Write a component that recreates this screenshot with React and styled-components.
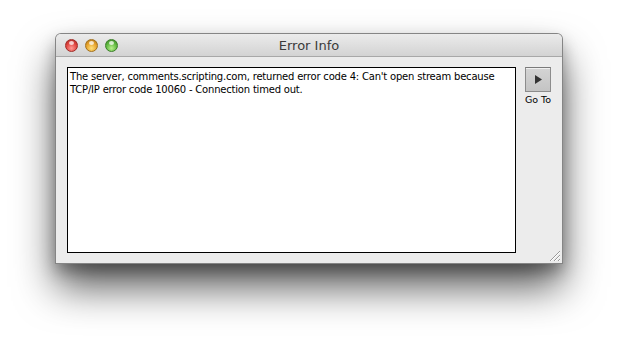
import { createGlobalStyle, styled } from 'styled-components';

const Global = createGlobalStyle`
  html, body { margin: 0; background: #fff; }
  body { font-family: "DejaVu Sans", sans-serif; }
`;

const Page = styled.div`
  width: 618px;
  height: 342px;
  padding: 34px 0 0 56px;
  box-sizing: border-box;
`;

const Window = styled.div`
  width: 506px;
  height: 229px;
  background: #ececec;
  border-radius: 5px 5px 0 0;
  box-shadow: 0 0 0 1px #858585, 0 24px 40px rgba(0, 0, 0, 0.65), 0 8px 16px rgba(0, 0, 0, 0.3);
  display: flex;
  flex-direction: column;
  position: relative;
`;

const TitleBar = styled.div`
  height: 22px;
  border-radius: 5px 5px 0 0;
  background: linear-gradient(#ebebeb, #d3d3d3);
  border-bottom: 1px solid #a8a8a8;
  display: flex;
  align-items: center;
  padding-left: 9px;
  position: relative;
`;

const Lights = styled.div`
  display: flex;
  gap: 7px;
`;

const Light = styled.span`
  width: 13px;
  height: 13px;
  box-sizing: border-box;
  border-radius: 50%;
  border: 1px solid ${p => p.$edge};
  background: radial-gradient(circle at 50% 75%, ${p => p.$hi} 0%, ${p => p.$c} 55%, ${p => p.$edge} 100%);
  position: relative;
  &::after {
    content: '';
    position: absolute;
    left: 3px;
    top: 1px;
    width: 5px;
    height: 4px;
    border-radius: 50%;
    background: rgba(255, 255, 255, 0.75);
  }
`;

const Title = styled.div`
  position: absolute;
  left: 0;
  right: 0;
  top: 0;
  line-height: 23px;
  text-align: center;
  font-size: 13px;
  color: #3a3a3a;
  pointer-events: none;
`;

const Body = styled.div`
  flex: 1;
  display: flex;
  padding: 10px 0 10px 11px;
  gap: 9px;
`;

const TextBox = styled.div`
  width: 443px;
  height: 180px;
  background: #fff;
  border: 1px solid #000;
  padding: 2px;
  box-sizing: content-box;
  font-size: 10px;
  line-height: 13px;
  color: #000;
  font-family: "DejaVu Sans", sans-serif;
  letter-spacing: -0.2px;
`;

const Side = styled.div`
  display: flex;
  flex-direction: column;
  align-items: center;
  width: 26px;
`;

const GoButton = styled.div`
  width: 24px;
  height: 23px;
  border: 1px solid #8c8c8c;
  border-top-color: #7a7a7a;
  background: linear-gradient(#d4d4d4, #c4c4c4);
  box-shadow: inset 0 1px 0 #f0f0f0;
  display: flex;
  align-items: center;
  justify-content: center;
`;

const Label = styled.div`
  font-size: 9.5px;
  margin-top: 2px;
  color: #000;
  white-space: nowrap;
`;

const Grip = styled.svg`
  position: absolute;
  right: 1px;
  bottom: 1px;
`;

export default function App() {
  return (
    <Page>
      <Global />
      <Window>
        <TitleBar>
          <Lights>
            <Light $c="#e0443e" $hi="#ff9a94" $edge="#a12a25" />
            <Light $c="#e6a12a" $hi="#ffe07a" $edge="#a3701a" />
            <Light $c="#5fb83f" $hi="#b8f08c" $edge="#3a7f27" />
          </Lights>
          <Title>Error Info</Title>
        </TitleBar>
        <Body>
          <TextBox>
            The server, comments.scripting.com, returned error code 4: Can't open stream because TCP/IP error code 10060 - Connection timed out.
          </TextBox>
          <Side>
            <GoButton>
              <svg width="7" height="9" viewBox="0 0 7 9">
                <path d="M0 0 L7 4.5 L0 9 Z" fill="#333" />
              </svg>
            </GoButton>
            <Label>Go To</Label>
          </Side>
        </Body>
        <Grip width="14" height="14" viewBox="0 0 14 14">
          <path d="M3 13 L13 3 M7 13 L13 7 M11 13 L13 11" stroke="#999" strokeWidth="1" />
          <path d="M4 13 L13 4 M8 13 L13 8 M12 13 L13 12" stroke="#fff" strokeWidth="1" />
        </Grip>
      </Window>
    </Page>
  );
}
